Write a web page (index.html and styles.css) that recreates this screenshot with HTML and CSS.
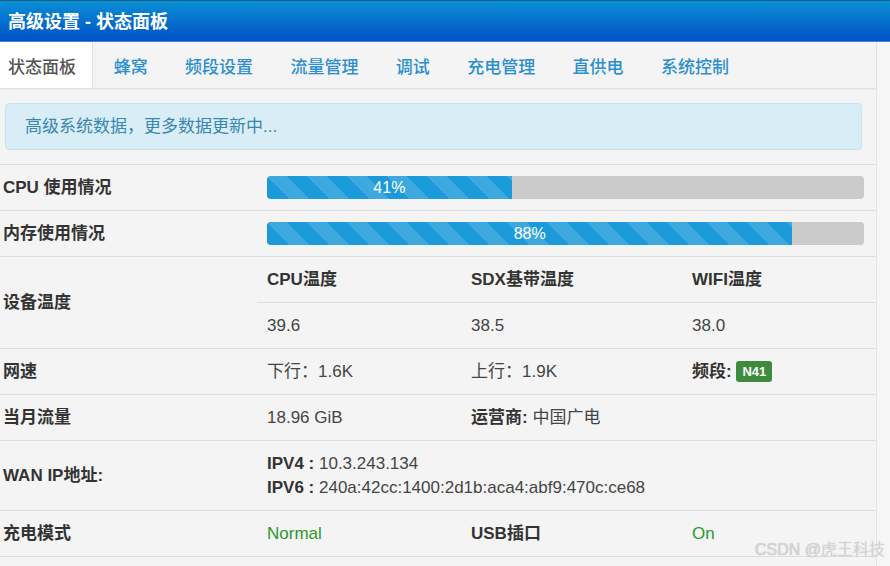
FILE: index.html
```html
<!DOCTYPE html>
<html lang="zh-CN">
<head>
    <meta charset="UTF-8">
    <meta name="viewport" content="width=device-width, initial-scale=1.0">
    <title>高级设置 - 状态面板</title>
    <link rel="stylesheet" href="styles.css">
</head>
<body>
    <header class="title">高级设置 - 状态面板</header>
    <div class="panel">
        <nav class="tabs">
            <a class="tab active">状态面板</a>
            <a class="tab">蜂窝</a>
            <a class="tab">频段设置</a>
            <a class="tab">流量管理</a>
            <a class="tab">调试</a>
            <a class="tab">充电管理</a>
            <a class="tab">直供电</a>
            <a class="tab">系统控制</a>
        </nav>

        <div class="alert">高级系统数据，更多数据更新中...</div>

        <table class="status">
            <colgroup>
                <col class="col-label">
                <col class="col-a">
                <col class="col-b">
                <col>
            </colgroup>
            <tr>
                <th>CPU 使用情况</th>
                <td colspan="3" class="bar-cell">
                    <div class="progress"><div class="bar" style="width: 41%">41%</div></div>
                </td>
            </tr>
            <tr>
                <th>内存使用情况</th>
                <td colspan="3" class="bar-cell">
                    <div class="progress"><div class="bar" style="width: 88%">88%</div></div>
                </td>
            </tr>
            <tr>
                <th rowspan="2">设备温度</th>
                <td class="strong">CPU温度</td>
                <td class="strong">SDX基带温度</td>
                <td class="strong">WIFI温度</td>
            </tr>
            <tr>
                <td>39.6</td>
                <td>38.5</td>
                <td>38.0</td>
            </tr>
            <tr>
                <th>网速</th>
                <td>下行：1.6K</td>
                <td>上行：1.9K</td>
                <td><b>频段:</b> <span class="badge">N41</span></td>
            </tr>
            <tr>
                <th>当月流量</th>
                <td>18.96 GiB</td>
                <td colspan="2"><b>运营商:</b> 中国广电</td>
            </tr>
            <tr class="wan">
                <th>WAN IP地址:</th>
                <td colspan="3">
                    <b>IPV4 :</b> 10.3.243.134<br>
                    <b>IPV6 :</b> 240a:42cc:1400:2d1b:aca4:abf9:470c:ce68
                </td>
            </tr>
            <tr>
                <th>充电模式</th>
                <td class="ok">Normal</td>
                <td class="strong">USB插口</td>
                <td class="ok">On</td>
            </tr>
        </table>
    </div>
    <div class="watermark">CSDN @虎王科技</div>
</body>
</html>
```

FILE: styles.css
```css
body {
    margin: 0;
    background-color: #f6f6f6;
    font-family: "Liberation Sans", "Noto Sans CJK SC", sans-serif;
    font-size: 17px;
    color: #333;
    height: 566px;
    overflow: hidden;
    position: relative;
}

.title {
    height: 42px;
    line-height: 42px;
    padding-left: 8px;
    border-top: 1px solid #1d5f86;
    box-sizing: border-box;
    background: linear-gradient(to bottom, #0b90d4, #0050c6);
    border-bottom: 1px solid #3c86dc;
    color: #fff;
    font-size: 18px;
    font-weight: bold;
}

.panel {
    width: 876px;
    border-right: 1px solid #e4e4e4;
    background-color: #f4f4f4;
    min-height: 524px;
}

.tabs {
    display: flex;
    height: 46px;
    border-bottom: 1px solid #e0e0e0;
    box-shadow: 0 1px 1px rgba(0, 0, 0, 0.04);
}

.tab {
    display: flex;
    align-items: center;
    padding: 0 18.7px;
    color: #2a8fcf;
    font-weight: 500;
    cursor: pointer;
}

.tab.active {
    background-color: #fff;
    color: #555;
    padding: 0 16px 0 8px;
    border-right: 1px solid #e2e2e2;
    margin-right: 2px;
}

.alert {
    margin: 14px 14px 14px 5px;
    height: 47px;
    box-sizing: border-box;
    padding-left: 19px;
    line-height: 45px;
    background-color: #d9edf7;
    border: 1px solid #c4e6f2;
    border-radius: 4px;
    color: #3a87ad;
}

.status {
    width: 876px;
    border-collapse: collapse;
    table-layout: fixed;
}

.col-label { width: 257px; }
.col-a { width: 204px; }
.col-b { width: 221px; }

.status th,
.status td {
    border-top: 1px solid #dedede;
    border-bottom: 1px solid #dedede;
    height: 45px;
    padding: 0 10px;
    text-align: left;
    vertical-align: middle;
    line-height: 24px;
    white-space: nowrap;
}

.status th {
    padding-left: 3px;
    font-weight: bold;
}

.status td {
    color: #444;
}

.status td.strong,
.status b {
    font-weight: bold;
    color: #333;
}

.status td.ok {
    color: #2a9a2a;
}

.status .wan td {
    height: 69px;
    padding-top: 0;
}

.bar-cell {
    padding-right: 12px !important;
}

.progress {
    height: 23px;
    background-color: #cbcbcb;
    border-radius: 4px;
    overflow: hidden;
}

.bar {
    height: 100%;
    background-color: #1b9ad9;
    background-image: linear-gradient(45deg,
        rgba(255, 255, 255, 0.15) 25%, transparent 25%,
        transparent 50%, rgba(255, 255, 255, 0.15) 50%,
        rgba(255, 255, 255, 0.15) 75%, transparent 75%, transparent);
    background-size: 40px 40px;
    color: #fff;
    text-align: center;
    font-size: 16px;
    line-height: 23px;
}

.badge {
    display: inline-block;
    background-color: #3d8b3d;
    color: #fff;
    font-weight: bold;
    font-size: 13px;
    line-height: 21px;
    padding: 0 6px;
    border-radius: 3px;
    vertical-align: 1px;
}

.watermark {
    position: absolute;
    right: 5px;
    bottom: 6px;
    font-size: 16px;
    font-weight: 300;
    color: #d6d6d6;
    text-shadow: 0 0 1px #b0b0b0;
}
```
